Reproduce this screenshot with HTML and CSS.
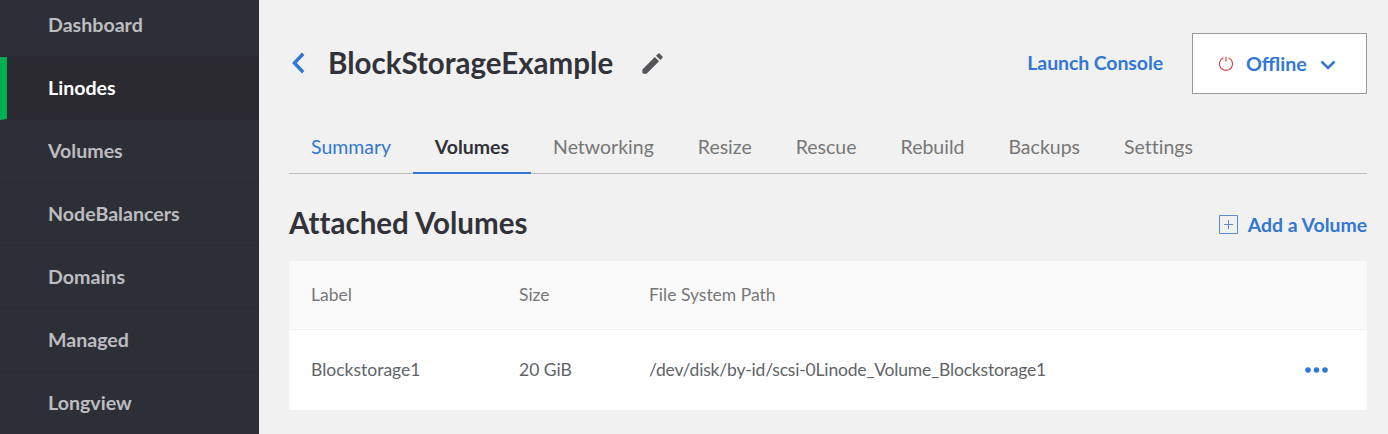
FILE: index.html
```html
<!DOCTYPE html>
<html lang="en">
<head>
<meta charset="utf-8">
<title>BlockStorageExample</title>
<link rel="stylesheet" href="styles.css">
</head>
<body>
<div class="app">
  <nav class="sidebar">
    <a class="nav-item">Dashboard</a>
    <a class="nav-item active">Linodes</a>
    <a class="nav-item">Volumes</a>
    <a class="nav-item">NodeBalancers</a>
    <a class="nav-item">Domains</a>
    <a class="nav-item">Managed</a>
    <a class="nav-item">Longview</a>
  </nav>
  <main class="main">
    <header class="header">
      <svg class="back" width="14" height="22" viewBox="0 0 14 22"><path d="M12.2 1.8 3.4 11l8.8 9.2" fill="none" stroke="#3278d3" stroke-width="3.4"/></svg>
      <h1 class="title">BlockStorageExample</h1>
      <svg class="edit" width="27" height="27" viewBox="0 0 24 24"><path fill="#555559" d="M3 17.25V20q0 1 1 1h2.75L17.81 9.94l-3.75-3.75L3 17.25zM20.71 7.04a1 1 0 0 0 0-1.41l-2.34-2.34a1 1 0 0 0-1.41 0l-1.83 1.83 3.75 3.75 1.83-1.83z"/></svg>
      <a class="launch">Launch Console</a>
      <button class="power">
        <svg class="power-icon" width="16" height="16" viewBox="0 0 16 16"><path d="M5.6 1.7a6.6 6.6 0 1 0 4.8 0M8 .8v4.6" fill="none" stroke="#d9434f" stroke-width="1.2"/></svg>
        <span>Offline</span>
        <svg class="chevron" width="16" height="10" viewBox="0 0 16 10"><path d="m1.5 1.5 6.5 6.5 6.5-6.5" fill="none" stroke="#3278d3" stroke-width="2.6"/></svg>
      </button>
    </header>
    <div class="tabs">
      <a class="tab link">Summary</a>
      <a class="tab selected">Volumes</a>
      <a class="tab">Networking</a>
      <a class="tab">Resize</a>
      <a class="tab">Rescue</a>
      <a class="tab">Rebuild</a>
      <a class="tab">Backups</a>
      <a class="tab">Settings</a>
    </div>
    <div class="section-head">
      <h2 class="section-title">Attached Volumes</h2>
      <a class="add"><svg width="20" height="20" viewBox="0 0 20 20"><path d="M.5 .5h18v18H.5zM9.5 5v9M5 9.5h9" fill="none" stroke="#5b8bd0"/></svg>Add a Volume</a>
    </div>
    <div class="table">
      <div class="row head"><span>Label</span><span>Size</span><span>File System Path</span><span></span></div>
      <div class="row body"><span>Blockstorage1</span><span>20 GiB</span><span class="path">/dev/disk/by-id/scsi-0Linode_Volume_Blockstorage1</span><svg class="more" width="23" height="6" viewBox="0 0 23 6"><g fill="#3278d3"><circle cx="3" cy="3" r="2.8"/><circle cx="11.5" cy="3" r="2.8"/><circle cx="20" cy="3" r="2.8"/></g></svg></div>
    </div>
  </main>
</div>
</body>
</html>
```
FILE: styles.css
```css
* { box-sizing: border-box; }
body { margin: 0; font-family: Lato, sans-serif; background: #f1f1f1; }
.app { display: flex; height: 434px; overflow: hidden; }
.sidebar { width: 259px; background: #2d2f37; flex: none; margin-top: -6px; }
.nav-item { display: flex; align-items: center; height: 63px; padding: 0 0 2px 48px; font-size: 19.6px; font-weight: 700; color: #bdbdc0; border-bottom: 1px solid #292a33; }
.nav-item.active { color: #fff; background: #2a2a30; border-left: 7px solid #00b050; padding-left: 41px; }
.main { flex: 1; padding: 32px 21px 0 30px; }
.header { display: flex; align-items: center; height: 62px; }
.back { margin-left: 2px; }
.title { margin: 0 0 2px 23px; font-size: 29.5px; font-weight: 700; color: #32323a; }
.edit { margin-left: 26px; }
.launch { margin: 0 0 1px auto; font-size: 19.5px; letter-spacing: -0.1px; font-weight: 700; color: #3278d3; }
.power { display: flex; align-items: center; width: 175px; height: 61px; margin: 1px 0 0 29px; padding: 0 0 0 25px; background: #fff; border: 1px solid #999; font: 700 19.7px Lato, sans-serif; color: #3278d3; }
.power span { margin: 0 13px 1px 12px; }
.chevron { margin-top: 2px; }
.tabs { display: flex; height: 54px; margin-top: 26px; border-bottom: 1px solid #bcbcbc; }
.tab { display: flex; align-items: center; height: 54px; padding: 0 22px 2px; font-size: 19.5px; font-variant-ligatures: none; color: #777; }
.tab.link { color: #3278d3; padding-right: 21.5px; }
.tab.selected { color: #32323a; font-weight: 700; padding: 0 22px; border-bottom: 2px solid #3278d3; }
.section-head { display: flex; align-items: center; justify-content: space-between; height: 87px; padding-top: 12px; }
.section-title { margin: 0 0 2px; font-size: 29.5px; font-variant-ligatures: none; color: #32323a; }
.add { display: flex; align-items: center; gap: 9px; padding-top: 2px; font-size: 19.4px; font-weight: 700; color: #3278d3; }
.row { display: grid; grid-template-columns: 208px 130px 1fr auto; align-items: center; padding: 0 39px 0 22px; font-size: 17.5px; }
.row span { padding-bottom: 2px; }
.head { height: 69px; background: #fafafa; color: #777; border-bottom: 1px solid #f1f1f1; }
.body { height: 80px; background: #fff; color: #606469; }
.path { letter-spacing: -0.18px; }
```
